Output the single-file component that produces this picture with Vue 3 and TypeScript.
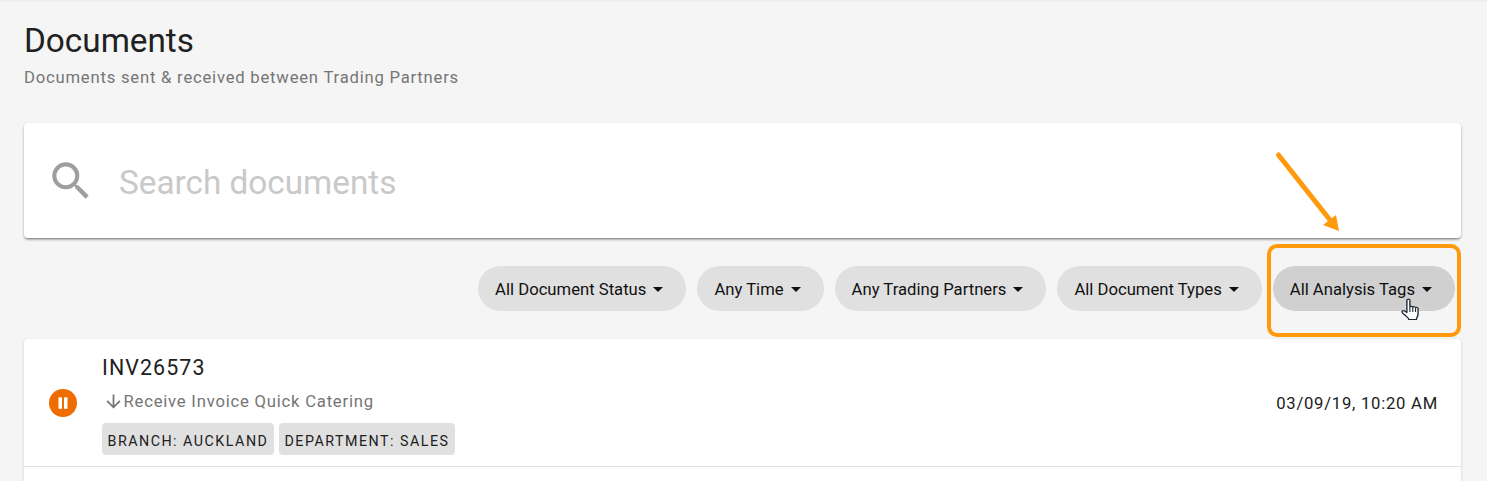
<script setup lang="ts">
const filters = [
  { label: 'All Document Status', active: false },
  { label: 'Any Time', active: false },
  { label: 'Any Trading Partners', active: false },
  { label: 'All Document Types', active: false },
  { label: 'All Analysis Tags', active: true },
]
const tags = ['BRANCH: AUCKLAND', 'DEPARTMENT: SALES']
</script>

<template>
  <div class="page">
    <header class="head">
      <h1>Documents</h1>
      <p>Documents sent &amp; received between Trading Partners</p>
    </header>

    <section class="search">
      <svg class="search-icon" width="50" height="50" viewBox="0 0 24 24" fill="#9e9e9e">
        <path d="M15.5 14h-.79l-.28-.27A6.471 6.471 0 0 0 16 9.500 6.500 6.500 0 1 0 9.500 16c1.610 0 3.090-.59 4.230-1.570l.27.28v.79l5 4.990L20.490 19l-4.990-5zm-6 0C7.010 14 5 11.990 5 9.500S7.010 5 9.500 5 14 7.010 14 9.500 11.990 14 9.500 14z" />
      </svg>
      <span class="placeholder">Search documents</span>
    </section>

    <div class="filters">
      <button v-for="f in filters" :key="f.label" class="chip" :class="{ active: f.active }">
        <span class="chip-label">{{ f.label }}</span><span class="caret"></span>
      </button>
    </div>

    <section class="card">
      <div class="row">
        <div class="status">
          <svg width="28" height="28" viewBox="0 0 28 28">
            <circle cx="14" cy="14" r="14" fill="#ef6c00" />
            <rect x="9.500" y="8.300" width="3.500" height="11.500" fill="#fff" />
            <rect x="15" y="8.300" width="3.500" height="11.500" fill="#fff" />
          </svg>
        </div>
        <div class="body">
          <div class="title">INV26573</div>
          <div class="sub">
            <svg width="21" height="21" viewBox="0 0 24 24" fill="#757575">
              <path d="M20 12l-1.410-1.410L13 16.170V4h-2v12.170l-5.580-5.590L4 12l8 8 8-8z" />
            </svg>
            <span>Receive Invoice Quick Catering</span>
          </div>
          <div class="tags">
            <span v-for="t in tags" :key="t" class="tag">{{ t }}</span>
          </div>
        </div>
        <div class="date">03/09/19, 10:20 AM</div>
      </div>
    </section>

    <!-- screenshot annotation -->
    <div class="highlight"></div>
    <svg class="arrow" width="80" height="100" viewBox="0 0 80 100">
      <line x1="11.500" y1="8" x2="63" y2="73" stroke="#ff9a0d" stroke-width="5" stroke-linecap="round" />
      <polygon points="72,84 56,78 69,68" fill="#ff9a0d" />
    </svg>
    <svg class="cursor" width="23" height="26" viewBox="0 0 20 26" preserveAspectRatio="none">
      <path d="M6 2.200c0-1.500 2.600-1.500 2.600 0v7c.3-1.200 2.400-1.100 2.500.2.4-1 2.300-.9 2.400.4.6-.8 2.200-.4 2.200.8v5.200c0 1.500-.4 2.800-1 3.900-.3.6-.4 1.100-.4 1.800H7.600c0-1-.6-1.600-1.300-2.300L2.200 15c-1.300-1.400.3-3.200 1.900-2L6 14.500V2.200z" fill="#fff" stroke="#1f2937" stroke-width="1.200" stroke-linejoin="round" />
      <path d="M8.600 9.500v4.500M11.100 9.700v4.300M13.500 10.200v3.800" stroke="#1f2937" stroke-width="1" fill="none" />
    </svg>
  </div>
</template>

<style>
html, body { margin: 0; background: #f5f5f5; }
</style>

<style scoped>
.page {
  position: relative;
  width: 1487px;
  height: 481px;
  overflow: hidden;
  box-sizing: border-box;
  padding: 20px 26px 0 24px;
  background: #f5f5f5;
  box-shadow: inset 0 3px 3px -2px rgba(0, 0, 0, .05);
  font-family: Roboto, "Liberation Sans", sans-serif;
  color: #212121;
}
.head h1 {
  margin: 0;
  font-size: 33.3px;
  font-weight: 400;
  line-height: 42px;
  color: #212121;
}
.head p {
  margin: 4px 0 0;
  font-size: 16.66px;
  line-height: 24px;
  letter-spacing: 0.78px;
  color: #757575;
}
.search {
  margin-top: 33px;
  height: 115px;
  display: flex;
  align-items: center;
  background: #fff;
  border-radius: 4px;
  box-shadow: 0 2px 3px -1px rgba(0, 0, 0, .5), 0 1px 3px rgba(0, 0, 0, .14);
  padding-left: 22px;
}
.search-icon { flex: none; }
.placeholder {
  margin: 3px 0 0 23px;
  font-size: 33.3px;
  color: #c9c9c9;
}
.filters {
  margin-top: 28px;
  display: flex;
  justify-content: flex-end;
  gap: 11px;
  padding-right: 6px;
}
.chip {
  height: 45px;
  padding: 0 23px 0 17px;
  border: 0;
  border-radius: 23px;
  background: #e0e0e0;
  color: #111;
  font: 400 16.66px Roboto, "Liberation Sans", sans-serif;
  display: flex;
  align-items: center;
}
.chip.active { background: #d0d0d0; }
.chip-label { margin-top: 1px; }
.caret {
  margin-left: 7px;
  margin-top: 1px;
  width: 0;
  height: 0;
  border-left: 5px solid transparent;
  border-right: 5px solid transparent;
  border-top: 5px solid #111;
}
.card {
  margin-top: 28px;
  height: 160px;
  background: #fff;
  border-radius: 4px 4px 0 0;
  box-shadow: 0 1px 3px rgba(0, 0, 0, .18);
}
.row {
  height: 128px;
  box-sizing: border-box;
  display: flex;
  align-items: center;
  border-bottom: 1px solid #e0e0e0;
  padding: 0 23px 0 25px;
}
.status { flex: none; width: 53px; display: flex; }
.body { flex: 1; align-self: flex-start; padding-top: 15px; }
.title {
  font-size: 21.4px;
  line-height: 28px;
  letter-spacing: 1.1px;
  color: #212121;
}
.sub {
  margin: 9px 0 0 0.5px;
  display: flex;
  align-items: center;
  height: 20px;
  font-size: 16.66px;
  letter-spacing: 0.78px;
  color: #757575;
}
.tags { margin-top: 12px; display: flex; gap: 5px; }
.tag {
  height: 32px;
  box-sizing: border-box;
  padding: 3px 5.5px 0;
  display: flex;
  align-items: center;
  background: #e0e0e0;
  border-radius: 4px;
  font-size: 14.28px;
  letter-spacing: 1.5px;
  color: #212121;
}
.date {
  margin-top: 1px;
  font-size: 16.66px;
  letter-spacing: 0.75px;
  color: #212121;
}
.highlight {
  position: absolute;
  left: 1267px;
  top: 244px;
  width: 194px;
  height: 93px;
  box-sizing: border-box;
  border: 4px solid #ff9a0d;
  border-radius: 10px;
}
.arrow { position: absolute; left: 1267px; top: 147px; }
.cursor { position: absolute; left: 1400px; top: 298px; }
</style>
